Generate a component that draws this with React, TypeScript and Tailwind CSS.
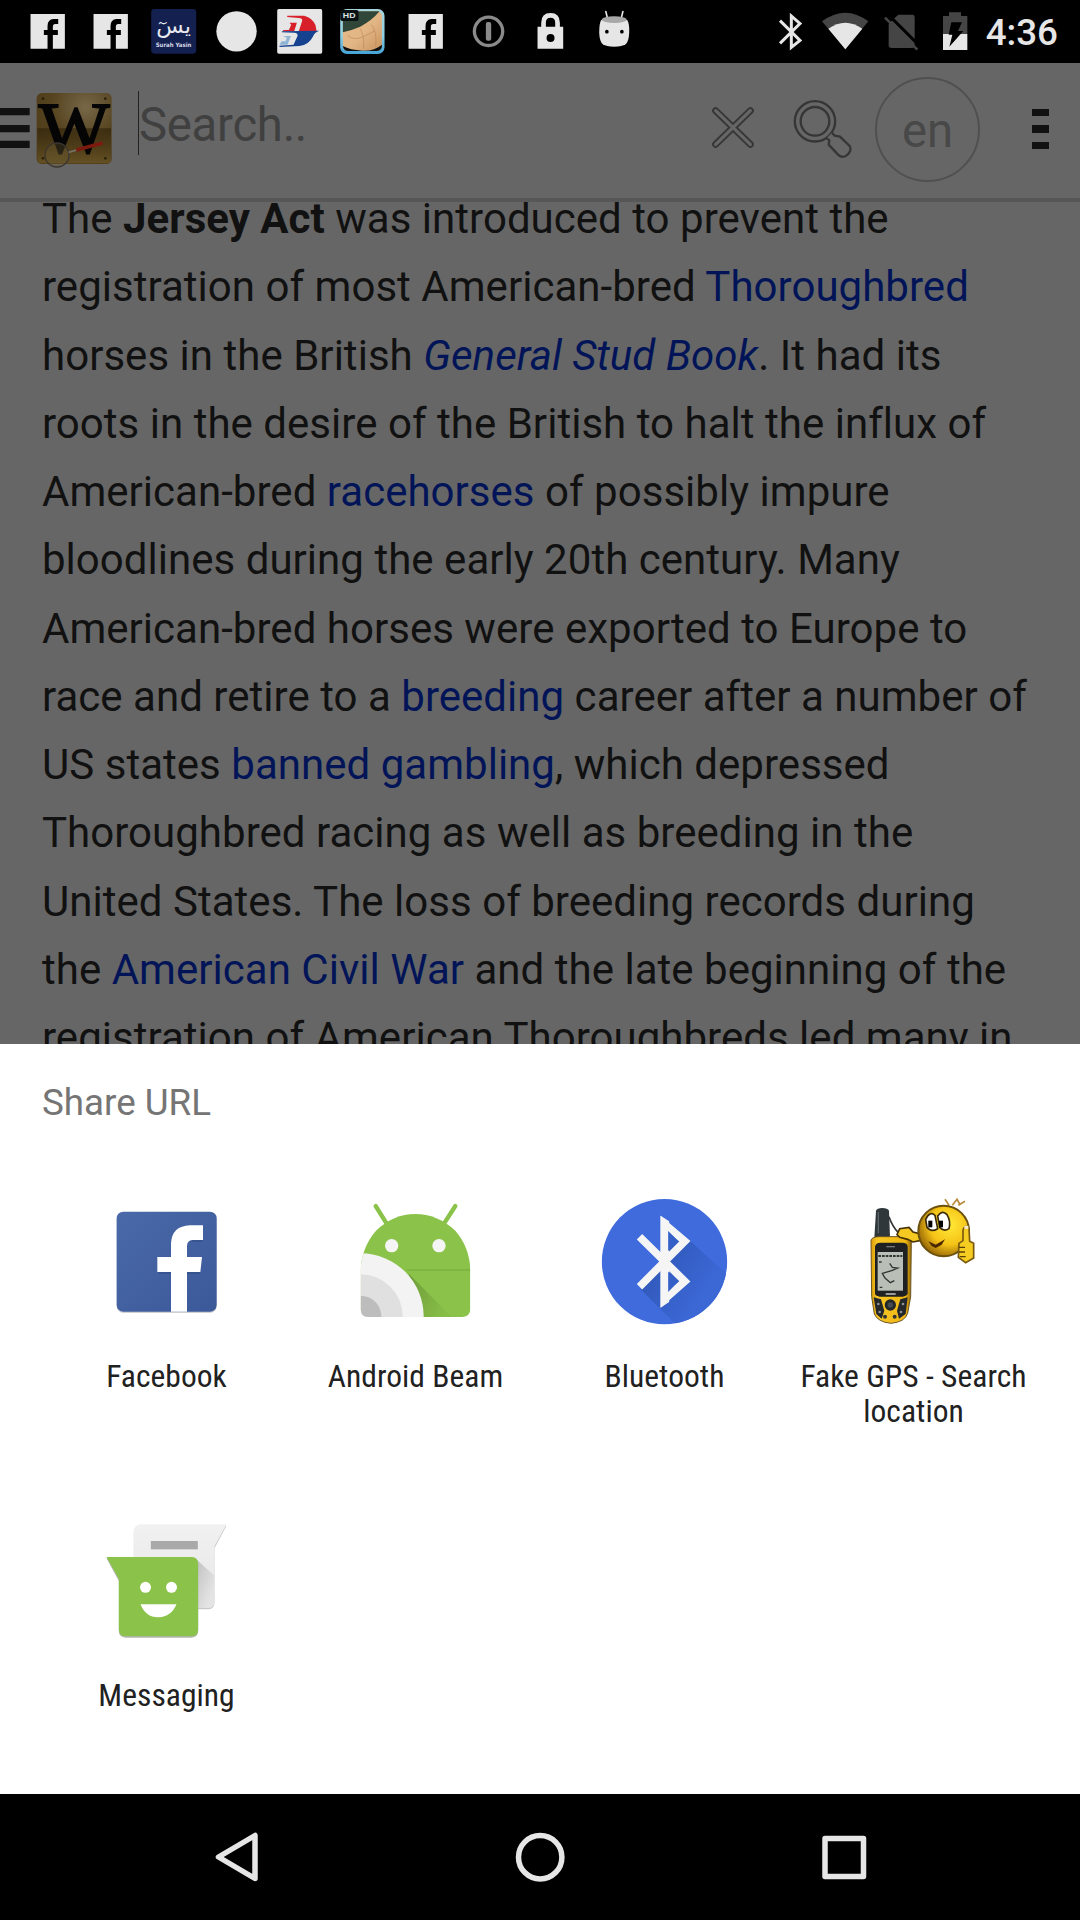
import React from 'react';

const FbGlyph = ({ viewBox, dx }: { viewBox: string; dx: number }) => (
  <svg viewBox={viewBox} className="h-[63px] w-[63px] shrink-0">
    <g transform={`translate(${dx} 0)`}>
      <path fill="#e6e6e6" d="M91 42H194V146H158V105H173V90H158V80Q158 72 165 72H174V57H160Q142 58 142 78V90H131V105H142V146H91Z" />
    </g>
  </svg>
);

const SurahIcon = () => (
  <svg viewBox="425.4 0 189 189" className="h-[63px] w-[63px] shrink-0">
    <rect x="453" y="27" width="135" height="134" rx="10" fill="#14204f" />
    <text x="520" y="98" textAnchor="middle" fontSize="62" fill="#e8eaf2" fontFamily="DejaVu Sans, sans-serif" textLength="104" lengthAdjust="spacingAndGlyphs">يسٓ</text>
    <text x="520" y="140" textAnchor="middle" fontSize="18" fontWeight="700" fill="#d5d9e8" fontFamily="DejaVu Sans, sans-serif" textLength="107" lengthAdjust="spacingAndGlyphs">Surah Yasin</text>
  </svg>
);

const DotIcon = () => (
  <svg viewBox="614.4 0 189 189" className="h-[63px] w-[63px] shrink-0">
    <circle cx="709" cy="94" r="60.5" fill="#e6e6e6" />
  </svg>
);

const AirlineIcon = () => (
  <svg viewBox="803.4 0 189 189" className="h-[63px] w-[63px] shrink-0">
    <rect x="831" y="27" width="135" height="134" rx="5" fill="#e6e6e6" />
    <path fill="#d8202a" d="M861 47H912Q938 54 946 76L949 93H896L906 62Q907 54 896 54L861 51Z" />
    <path fill="#d8202a" d="M868 68H890L882 94H849V90H866L873 74Z" />
    <path fill="#17428f" d="M845 94L957 92Q943 97 938 110Q926 134 898 138L838 141V137L880 134L892 108Q894 99 882 98L845 97Z" />
    <path fill="#8fb4d4" d="M848 108H872L862 134H838L844 124H856L860 113Z" />
  </svg>
);

const HdIcon = () => (
  <svg viewBox="2.4 0 189 189" className="h-[63px] w-[63px] shrink-0">
    <defs>
      <linearGradient id="skin" x1="0" y1="0" x2="1" y2="1">
        <stop offset="0" stopColor="#e9bd88" />
        <stop offset="0.55" stopColor="#e2b585" />
        <stop offset="1" stopColor="#c9945f" />
      </linearGradient>
      <linearGradient id="rim" x1="0" y1="0" x2="0" y2="1">
        <stop offset="0" stopColor="#a8d4dc" />
        <stop offset="0.6" stopColor="#8fd0e4" />
        <stop offset="1" stopColor="#43a3d6" />
      </linearGradient>
    </defs>
    <rect x="30" y="27" width="133" height="135" rx="20" fill="url(#rim)" />
    <rect x="38" y="34" width="117" height="118" rx="14" fill="url(#skin)" />
    <path fill="#2f4638" d="M38 34H148Q125 62 90 80Q62 92 38 97Z" />
    <path fill="none" stroke="#bc8552" strokeWidth="3" opacity="0.6" d="M52 106Q70 122 94 112T134 92M90 86Q104 112 100 146M124 74Q142 100 136 140" />
    <path fill="#111" d="M38 138Q60 150 96 152T155 134V142Q152 153 138 153H54Q40 153 38 138Z" />
    <rect x="30" y="30" width="55" height="33" rx="6" fill="#0a1114" />
    <text x="57" y="53" textAnchor="middle" fontSize="22" fontWeight="700" fill="#dfe5e6" fontFamily="Liberation Sans, sans-serif" textLength="38" lengthAdjust="spacingAndGlyphs">HD</text>
  </svg>
);

const InfoIcon = () => (
  <svg viewBox="380.4 0 189 189" className="h-[63px] w-[63px] shrink-0">
    <circle cx="475" cy="94" r="42.5" fill="none" stroke="#8a8a8a" strokeWidth="10" />
    <rect x="467" y="66" width="16" height="56" rx="6" fill="#8a8a8a" />
  </svg>
);

const LockIcon = () => (
  <svg viewBox="569.4 0 189 189" className="h-[63px] w-[63px] shrink-0">
    <path fill="none" stroke="#e6e6e6" strokeWidth="14" d="M640 86V68Q640 46 661 46T682 68V86" />
    <path fill="#e6e6e6" fillRule="evenodd" d="M622 80H699V146H622ZM661 102A12 12 0 1 0 661 126A12 12 0 1 0 661 102Z" />
  </svg>
);

const MarshmallowIcon = () => (
  <svg viewBox="758.4 0 189 189" className="h-[63px] w-[63px] shrink-0">
    <path stroke="#e6e6e6" strokeWidth="5" strokeLinecap="round" d="M827 35L832 56M878 35L873 56" />
    <path fill="#e6e6e6" d="M813 60Q852 48 891 60Q898 70 897 98Q896 124 886 133Q876 140 852 140T818 133Q808 124 807 98Q807 70 813 60Z" />
    <ellipse cx="852" cy="59" rx="37" ry="10" fill="#a8a8a8" />
    <circle cx="830" cy="95" r="5.5" />
    <circle cx="875" cy="95" r="5.5" />
  </svg>
);

const StatusBar = () => (
  <div className="flex h-[63px] shrink-0 items-center bg-black pl-[15.8px]">
    <FbGlyph viewBox="47.4 0 189 189" dx={0} />
    <FbGlyph viewBox="236.4 0 189 189" dx={189} />
    <SurahIcon />
    <DotIcon />
    <AirlineIcon />
    <HdIcon />
    <FbGlyph viewBox="191.4 0 189 189" dx={144} />
    <InfoIcon />
    <LockIcon />
    <MarshmallowIcon />
    <div className="ml-auto flex items-center pr-[22px]">
      <svg viewBox="254 0 160 189" className="h-[63px] w-[53.33px]">
        <path fill="none" stroke="#e6e6e6" strokeWidth="9" d="M302 62L362 121L336 142V48L362 71L302 130" />
      </svg>
      <svg viewBox="414 0 166 189" className="h-[63px] w-[55.33px]">
        <path fill="#454545" d="M426 64Q496 12 565 64L496 148Z" />
        <path fill="#e6e6e6" d="M445 86Q496 50 547 86L496 148Z" />
      </svg>
      <svg viewBox="580 0 170 189" className="h-[63px] w-[56.67px]">
        <path fill="#454545" d="M644 55L656 44H698Q705 44 705 51V136Q705 144 697 144H636Q627 144 627 136V72Z" />
        <path stroke="#000" strokeWidth="9" d="M624 42L722 140" />
        <path stroke="#454545" strokeWidth="8" d="M616 53L713 149" />
      </svg>
      <svg viewBox="750 0 150 189" className="h-[63px] w-[50px]">
        <path fill="#454545" d="M789 48H807V37H843V48H862V103H789Z" />
        <path fill="#e6e6e6" d="M789 102H862V150H789Z" />
        <path d="M814 67H846L834 93H850L808 140L817 104H806Z" />
      </svg>
      <span className="mt-[1px] ml-[6px] text-[36.75px] leading-[43px] font-medium text-[#e6e6e6]">4:36</span>
    </div>
  </div>
);

const WikiLogo = () => (
  <svg viewBox="0 189 345 405" className="h-[135px] w-[115px] shrink-0">
    <defs>
      <radialGradient id="gold" cx="0.65" cy="0.2" r="0.9">
        <stop offset="0" stopColor="#776849" />
        <stop offset="0.5" stopColor="#56431f" />
        <stop offset="1" stopColor="#4b3a17" />
      </radialGradient>
      <linearGradient id="goldFloor" x1="0" y1="0" x2="0" y2="1">
        <stop offset="0" stopColor="#2c1f08" stopOpacity="0.6" />
        <stop offset="1" stopColor="#6b5626" stopOpacity="0.8" />
      </linearGradient>
    </defs>
    <path fill="#111" d="M0 324H89V346H0ZM0 375H89V397H0ZM0 422H89V444H0Z" />
    <rect x="110" y="279" width="225" height="213" rx="16" fill="url(#gold)" />
    <path fill="url(#goldFloor)" d="M112 385H333V480Q332 490 320 490H124Q113 490 112 480Z" />
    <g fill="#2a200c">
      <circle cx="129" cy="296" r="4" />
      <circle cx="316" cy="296" r="4" />
      <circle cx="129" cy="475" r="4" />
      <circle cx="316" cy="475" r="4" />
    </g>
    <text x="116" y="456" fontSize="214" fontFamily="Liberation Serif, serif" textLength="212" lengthAdjust="spacingAndGlyphs" fill="#050505" stroke="#050505" strokeWidth="6">W</text>
    <circle cx="171" cy="465" r="36" fill="#6b5b33" fillOpacity="0.35" stroke="#3b3530" strokeWidth="4" />
    <path stroke="#77716b" strokeWidth="5" d="M206 457L230 450" />
    <path stroke="#7c1a10" strokeWidth="11" d="M229 450L308 429" />
  </svg>
);

const Toolbar = () => (
  <div className="flex h-[139px] shrink-0 items-start border-b-4 border-[#575757] bg-[#666]">
    <WikiLogo />
    <div className="mt-[28px] ml-[23px] flex h-[64px] flex-1 items-center border-l border-[#222]">
      <span className="mt-[4px] text-[47.25px] leading-[56px] tracking-[-0.25px] text-[#404040]">Search..</span>
    </div>
    <svg viewBox="69 189 500 405" className="h-[135px] w-[166.67px] shrink-0" fill="none">
      <path stroke="#363636" strokeWidth="21" strokeLinecap="round" d="M107 332L211 433M211 332L107 433" />
      <path stroke="#666" strokeWidth="10" strokeLinecap="round" d="M107 332L211 433M211 332L107 433" />
      <g stroke="#363636" strokeWidth="7" strokeLinejoin="round">
        <circle cx="405" cy="364" r="60.5" />
        <circle cx="405" cy="364" r="43" />
        <path fill="#666" d="M440 415L448 421L446 434L474 464Q487 476 500 466Q517 453 509 438L480 410L464 407L456 398" />
      </g>
    </svg>
    <div className="mt-[14px] ml-[5px] flex size-[105px] shrink-0 items-center justify-center rounded-full border-[2.5px] border-[#505050]">
      <span className="mt-[3px] text-[47.25px] leading-[56px] text-[#484848]">en</span>
    </div>
    <div className="mt-[45.5px] mr-[31px] ml-[52px] flex flex-col gap-[9px]">
      <div className="h-[7.5px] w-[17px] bg-[#111]" />
      <div className="h-[7.5px] w-[17px] bg-[#111]" />
      <div className="h-[7.5px] w-[17px] bg-[#111]" />
    </div>
  </div>
);

const A = ({ children }: { children: React.ReactNode }) => <span className="text-[#021458]">{children}</span>;

const lines: React.ReactNode[] = [
  <>The <b>Jersey Act</b> was introduced to prevent the</>,
  <>registration of most American-bred <A>Thoroughbred</A></>,
  <>horses in the British <A><i>General Stud Book</i></A>. It had its</>,
  <>roots in the desire of the British to halt the influx of</>,
  <>American-bred <A>racehorses</A> of possibly impure</>,
  <>bloodlines during the early 20th century. Many</>,
  <>American-bred horses were exported to Europe to</>,
  <>race and retire to a <A>breeding</A> career after a number of</>,
  <>US states <A>banned gambling</A>, which depressed</>,
  <>Thoroughbred racing as well as breeding in the</>,
  <>United States. The loss of breeding records during</>,
  <>the <A>American Civil War</A> and the late beginning of the</>,
  <>registration of American Thoroughbreds led many in</>,
];

const Article = () => (
  <div className="h-[842px] shrink-0 overflow-hidden bg-[#666] pl-[42px]">
    <div className="mt-[-17px] text-[42px] leading-[68.25px] tracking-[0.03px] whitespace-nowrap text-[#111]">
      {lines.map((l, i) => (
        <div key={i} className="h-[68.25px]">{l}</div>
      ))}
    </div>
  </div>
);

const FacebookIcon = () => (
  <svg viewBox="42 54 378 378" className="size-[126px] overflow-visible">
    <defs>
      <linearGradient id="fb" x1="0" y1="0" x2="1" y2="1">
        <stop offset="0" stopColor="#4a69a9" />
        <stop offset="1" stopColor="#3b5998" />
      </linearGradient>
    </defs>
    <rect x="80" y="99" width="300" height="300" rx="20" fill="#000" opacity="0.18" />
    <rect x="80" y="95" width="300" height="300" rx="20" fill="url(#fb)" />
    <path fill="#2c4880" opacity="0.5" d="M243 282H205V276H243ZM291 282H328L331 272H291ZM300 186H338V180H300Z" />
    <path fill="#fff" d="M243 395V276H202V231H243V190Q246 138 300 136H339V180H308Q291 181 291 198V231H336L331 276H291V395Z" />
  </svg>
);

const BeamIcon = () => (
  <svg viewBox="39 54 378 378" className="size-[126px] overflow-visible">
    <defs>
      <clipPath id="beamBody">
        <path d="M62 268Q66 200 108 152Q160 102 226 102T346 152Q388 200 391 268V388Q390 410 368 411H84Q62 410 62 388Z" />
      </clipPath>
      <linearGradient id="beamShade" x1="0" y1="0" x2="1" y2="0.6">
        <stop offset="0" stopColor="#6f9c3a" />
        <stop offset="1" stopColor="#86bd47" />
      </linearGradient>
    </defs>
    <path stroke="#8bc34a" strokeWidth="13" strokeLinecap="round" d="M107 78L140 131M346 78L312 131" />
    <g clipPath="url(#beamBody)">
      <rect x="50" y="90" width="350" height="330" fill="#8bc34a" />
      <path fill="#7cb13f" d="M200 268H391V272H200Z" />
      <path fill="url(#beamShade)" d="M205 280L335 411H240Z" />
      <circle cx="62" cy="409" r="189" fill="#f3f3f3" />
      <circle cx="62" cy="409" r="126" fill="#e0e0e0" />
      <circle cx="62" cy="409" r="62" fill="#bdbdbd" />
    </g>
    <circle cx="155" cy="197" r="20" fill="#f5f5f5" />
    <circle cx="297" cy="197" r="20" fill="#f5f5f5" />
  </svg>
);

const BluetoothIcon = () => (
  <svg viewBox="36.5 54 378 378" className="size-[126px] overflow-visible">
    <defs>
      <clipPath id="btc"><circle cx="224" cy="245" r="188" /></clipPath>
      <linearGradient id="btShade" x1="0" y1="0" x2="1" y2="0.7">
        <stop offset="0" stopColor="#2c52ad" />
        <stop offset="0.8" stopColor="#3c68d6" />
      </linearGradient>
    </defs>
    <g clipPath="url(#btc)">
      <rect x="34" y="55" width="380" height="380" fill="#3f6bdc" />
      <path fill="url(#btShade)" d="M300 182L420 290V440H265L152 328L235 245L240 150Z" />
    </g>
    <path fill="none" stroke="#f5f5f5" strokeWidth="23" strokeLinejoin="miter" d="M149 170L285 304L224 358V132L285 184L149 320" />
    <path fill="#f5f5f5" d="M212 107L238 124V366L212 383Z" />
    <path fill="#3560c8" d="M235 153L266 184L235 213ZM235 275L266 304L235 336Z" />
  </svg>
);

const GpsIcon = () => (
  <svg viewBox="4 54 378 378" className="size-[126px] overflow-visible">
    <defs>
      <radialGradient id="face" cx="0.62" cy="0.38" r="0.65">
        <stop offset="0" stopColor="#ffe93a" />
        <stop offset="0.6" stopColor="#f5c316" />
        <stop offset="1" stopColor="#9a6a08" />
      </radialGradient>
      <linearGradient id="shell" x1="0" y1="0" x2="1" y2="0">
        <stop offset="0" stopColor="#d99a08" />
        <stop offset="0.15" stopColor="#f7c626" />
        <stop offset="0.85" stopColor="#f0b713" />
        <stop offset="1" stopColor="#94680a" />
      </linearGradient>
    </defs>
    <path fill="none" stroke="#333" strokeWidth="5" d="M118 110Q128 140 148 160" />
    <path fill="#30373b" d="M79 92Q82 84 98 84T118 92L121 172H74Z" />
    <path stroke="#59646a" strokeWidth="4" d="M86 96V160" />
    <path fill="url(#shell)" stroke="#6b5520" strokeWidth="3" d="M64 180Q68 170 90 170H160Q182 170 185 180L183 350L174 400Q166 426 124 430Q84 426 74 402L66 350Z" />
    <path fill="#1e2021" d="M76 200Q78 188 92 188H158Q173 188 174 200V340Q172 348 160 350H90Q76 348 76 340Z" />
    <rect x="84" y="216" width="76" height="116" fill="#b9bfb6" />
    <path stroke="#303532" strokeWidth="6" strokeDasharray="8 3" d="M86 228H158" />
    <path fill="none" stroke="#303532" strokeWidth="4" d="M120 250L128 262L144 264L126 272L98 280L106 294L122 308L134 302M88 246H96M90 322H98" />
    <path stroke="#d8d8d8" strokeWidth="4" d="M108 342H138" />
    <path stroke="#777" strokeWidth="4" d="M110 200H136" />
    <path fill="#25282a" d="M72 352L94 358L104 392L96 416L80 402ZM174 352L152 358L142 392L148 416L168 402Z" />
    <circle cx="122" cy="375" r="17" fill="#25282a" />
    <circle cx="122" cy="375" r="8" fill="#454c51" />
    <circle cx="106" cy="410" r="6" fill="#333" />
    <circle cx="135" cy="410" r="6" fill="#333" />
    <g fill="#8b9296">
      <circle cx="86" cy="372" r="4" />
      <circle cx="90" cy="396" r="4" />
      <circle cx="160" cy="372" r="4" />
      <circle cx="154" cy="396" r="4" />
    </g>
    <path fill="#f5c922" stroke="#473205" strokeWidth="5" d="M142 164L150 146L178 142L190 156L212 162V182L190 186L174 178L150 172Z" />
    <path fill="none" stroke="#b98a3a" strokeWidth="5" d="M298 76L286 58M308 76L322 58L330 72M326 76L346 64" />
    <circle cx="282" cy="153" r="76" fill="url(#face)" stroke="#6b500e" strokeWidth="6" />
    <path fill="#fff" stroke="#3a2b08" strokeWidth="5" d="M228 118Q240 92 256 106L264 146Q244 158 232 142ZM264 108Q278 88 292 104Q304 124 298 146Q282 156 270 142Z" />
    <rect x="236" y="122" width="12" height="20" />
    <rect x="268" y="122" width="12" height="20" />
    <path fill="#4a2703" d="M236 184L258 194L286 178L276 194L258 204L246 198Z" />
    <path fill="#f5cc22" stroke="#7a5a10" strokeWidth="5" d="M328 190L340 182V150Q346 132 358 144L360 184L372 190V234L348 248L326 232Z" />
    <path stroke="#5b4006" strokeWidth="4" d="M328 202H346M328 216H346M330 230H348" />
    <path stroke="#fbe9c9" strokeWidth="9" d="M344 142H356" />
  </svg>
);

const MessagingIcon = () => (
  <svg viewBox="42.5 50 378 378" className="size-[126px] overflow-visible">
    <defs>
      <linearGradient id="paper" x1="0" y1="0" x2="0" y2="1">
        <stop offset="0" stopColor="#f1f1f1" />
        <stop offset="1" stopColor="#e6e6e6" />
      </linearGradient>
      <linearGradient id="fold" x1="0" y1="0" x2="1" y2="1">
        <stop offset="0" stopColor="#bdbdbd" />
        <stop offset="0.8" stopColor="#e4e4e4" />
      </linearGradient>
    </defs>
    <path fill="#c9c9c9" d="M132 96Q133 78 152 76H410L374 144V308Q373 326 356 327H132Z" />
    <path fill="url(#paper)" d="M132 92Q133 74 152 72H410L374 138V304Q373 322 356 323H132Z" />
    <path fill="url(#fold)" d="M314 172L374 226V304Q373 322 356 323H320Z" />
    <rect x="183" y="122" width="141" height="25" fill="#a9a9a9" />
    <path fill="#b5b5b5" d="M50 174L87 242V392Q88 411 107 412H305Q324 411 325 392V190Z" />
    <path fill="#8bc34a" d="M50 170H306Q324 171 325 190V388Q324 407 305 408H107Q88 407 87 388V236Z" />
    <circle cx="167" cy="261" r="16.5" fill="#fff" />
    <circle cx="245" cy="261" r="16.5" fill="#fff" />
    <path fill="#fff" d="M152 312H260Q244 350 206 351T152 312Z" />
  </svg>
);

const Target = ({ icon, children }: { icon: React.ReactNode; children: React.ReactNode }) => (
  <div className="flex h-[318.5px] flex-col items-center">
    {icon}
    <div className="mt-[35px] text-center font-['Roboto_Condensed',Roboto,sans-serif] text-[31.5px] leading-[35px] font-stretch-condensed tracking-[0.04px] whitespace-nowrap text-[#212121]">
      {children}
    </div>
  </div>
);

const ShareSheet = () => (
  <div className="flex h-[750px] shrink-0 flex-col bg-white">
    <div className="mt-[36.5px] ml-[42px] text-[36.75px] leading-[43px] text-[#757575]">Share URL</div>
    <div className="mt-[74.5px] grid grid-cols-4 px-[42px]">
      <Target icon={<FacebookIcon />}>Facebook</Target>
      <Target icon={<BeamIcon />}>Android Beam</Target>
      <Target icon={<BluetoothIcon />}>Bluetooth</Target>
      <Target icon={<GpsIcon />}>Fake GPS - Search<br />location</Target>
      <Target icon={<MessagingIcon />}>Messaging</Target>
    </div>
  </div>
);

const NavBar = () => (
  <div className="flex h-[126px] shrink-0 items-center justify-between bg-black px-[211px]">
    <svg viewBox="0 0 50 50" className="size-[50px]" fill="none" stroke="#e6e6e6" strokeWidth="5.5" strokeLinejoin="round">
      <path d="M44 3.5V46.5L7.5 25Z" />
    </svg>
    <svg viewBox="0 0 50 50" className="size-[50px]" fill="none" stroke="#e6e6e6" strokeWidth="5.5">
      <circle cx="25.2" cy="25.2" r="21.7" />
    </svg>
    <svg viewBox="0 0 50 50" className="size-[50px]" fill="none" stroke="#e6e6e6" strokeWidth="5.5" strokeLinejoin="round">
      <path d="M6 6.5H44.5V44.5H6Z" />
    </svg>
  </div>
);

export default function App() {
  return (
    <div className="flex h-[1920px] w-[1080px] flex-col overflow-hidden bg-black font-[Roboto,sans-serif]">
      <StatusBar />
      <Toolbar />
      <Article />
      <div className="flex h-[876px] shrink-0 flex-col">
        <ShareSheet />
        <NavBar />
      </div>
    </div>
  );
}
